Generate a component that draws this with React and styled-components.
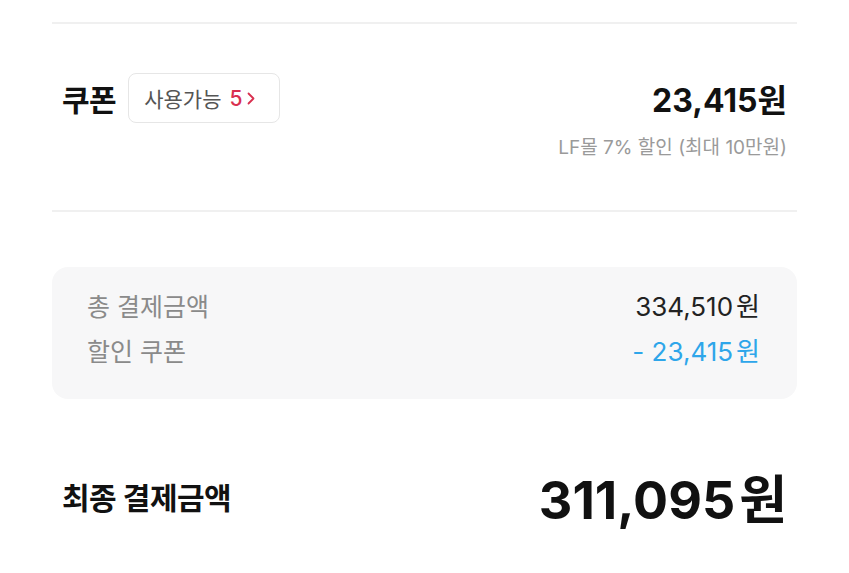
import styled, { createGlobalStyle } from "styled-components";

const GlobalStyle = createGlobalStyle`
  html, body {
    margin: 0;
    padding: 0;
    background: #ffffff;
  }
  body {
    font-family: Inter, "Noto Sans CJK KR", sans-serif;
    color: #111111;
  }
`;

const Page = styled.div`
  width: 849px;
  height: 573px;
  padding: 0 52px;
  box-sizing: border-box;
  overflow: hidden;
`;

const Divider = styled.div`
  height: 2px;
  background: #f0f0f0;
  margin-top: ${(p) => p.$top || 0}px;
`;

const CouponSection = styled.section`
  padding: 49px 10px 48px;
  display: flex;
  flex-direction: column;
  gap: 11px;
`;

const Row = styled.div`
  display: flex;
  align-items: center;
  justify-content: space-between;
`;

const TitleGroup = styled.div`
  display: flex;
  align-items: center;
  gap: 12px;
`;

const Title = styled.h2`
  margin: 0;
  font-size: 30px;
  font-weight: 700;
  letter-spacing: -0.5px;
  color: #111111;
`;

const Chip = styled.button`
  height: 50px;
  padding: 0 24px 0 15px;
  border: 1.5px solid #e6e6e6;
  border-radius: 8px;
  background: #ffffff;
  display: flex;
  align-items: center;
  gap: 8px;
  font-family: inherit;
  font-size: 21px;
  color: #555555;
  cursor: pointer;
`;

const Count = styled.span`
  color: #d9304f;
  font-weight: 500;
  display: flex;
  align-items: center;
  gap: 5px;
`;

const Amount = styled.div`
  font-size: 32px;
  font-weight: 700;
  color: #111111;
`;

const Note = styled.div`
  align-self: flex-end;
  font-size: 19px;
  line-height: 28px;
  color: #9a9a9a;
`;

const Summary = styled.div`
  margin-top: 55px;
  background: #f7f7f8;
  border-radius: 16px;
  padding: 25px 37px 32px 35px;
  display: flex;
  flex-direction: column;
  gap: 15px;
`;

const SummaryRow = styled.div`
  display: flex;
  justify-content: space-between;
  align-items: center;
  line-height: 30px;
`;

const Label = styled.span`
  font-size: 25px;
  color: #8a8a8a;
`;

const Value = styled.span`
  font-size: 26px;
  color: ${(p) => (p.$blue ? "#2ea6ea" : "#222222")};
`;

const Won = styled.span`
  margin-left: ${(p) => p.$gap || 3}px;
`;

const FinalRow = styled.div`
  margin-top: 66px;
  padding: 0 10px;
  display: flex;
  justify-content: space-between;
  align-items: center;
  height: 62px;
`;

const FinalLabel = styled.div`
  font-size: 30px;
  font-weight: 700;
  letter-spacing: -0.5px;
`;

const FinalAmount = styled.div`
  font-size: 52px;
  font-weight: 700;
`;

const Chevron = () => (
  <svg width="8" height="13" viewBox="0 0 8 13" fill="none">
    <path
      d="M1.5 1.5L6.5 6.5L1.5 11.5"
      stroke="#d9304f"
      strokeWidth="1.8"
      strokeLinecap="round"
      strokeLinejoin="round"
    />
  </svg>
);

export default function App() {
  return (
    <Page>
      <GlobalStyle />
      <Divider $top={22} />
      <CouponSection>
        <Row>
          <TitleGroup>
            <Title>쿠폰</Title>
            <Chip>
              사용가능
              <Count>
                5
                <Chevron />
              </Count>
            </Chip>
          </TitleGroup>
          <Amount>23,415원</Amount>
        </Row>
        <Note>LF몰 7% 할인 (최대 10만원)</Note>
      </CouponSection>
      <Divider />
      <Summary>
        <SummaryRow>
          <Label>총 결제금액</Label>
          <Value>
            334,510<Won>원</Won>
          </Value>
        </SummaryRow>
        <SummaryRow>
          <Label>할인 쿠폰</Label>
          <Value $blue>
            - 23,415<Won>원</Won>
          </Value>
        </SummaryRow>
      </Summary>
      <FinalRow>
        <FinalLabel>최종 결제금액</FinalLabel>
        <FinalAmount>
          311,095<Won $gap={4}>원</Won>
        </FinalAmount>
      </FinalRow>
    </Page>
  );
}
